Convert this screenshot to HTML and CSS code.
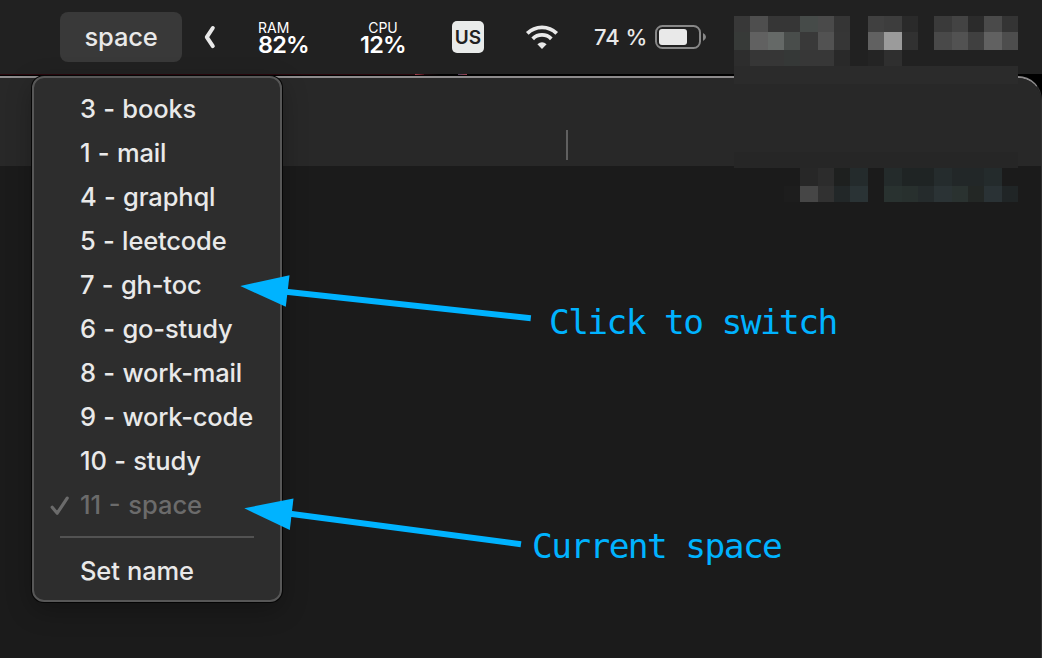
FILE: index.html
```html
<!DOCTYPE html>
<html lang="en">
<head>
<meta charset="utf-8">
<title>Space switcher</title>
<link rel="stylesheet" href="styles.css">
</head>
<body>
<div class="screen">
  <header class="menubar">
    <div class="space-button"><span class="space-label">space</span></div>
    <svg class="chevron" width="14" height="26" viewBox="0 0 14 26"><path d="M10.8 4 L4.8 13.2 L10.8 22.2" /></svg>
    <div class="stat ram"><span class="stat-name">RAM</span><span class="stat-value">82%</span></div>
    <div class="stat cpu"><span class="stat-name">CPU</span><span class="stat-value">12%</span></div>
    <div class="input-source"><span class="input-label">US</span></div>
    <svg class="wifi" width="34" height="26" viewBox="0 0 34 26">
      <path class="arc" d="M2.3 9.4 A20.8 20.8 0 0 1 31.7 9.4" />
      <path class="arc" d="M7.7 14.8 A13.2 13.2 0 0 1 26.3 14.8" />
      <path class="dot" d="M17 25 L12.4 20.3 Q17 16 21.6 20.3 Z" />
    </svg>
    <span class="percent">74 %</span>
    <svg class="battery" width="52" height="24" viewBox="0 0 52 24">
      <rect class="shell" x="1" y="1" width="44" height="22" rx="6.5" />
      <rect class="charge" x="4" y="4" width="28" height="16" rx="3" />
      <path class="cap" d="M48 8 Q51 9.5 51 12 Q51 14.5 48 16 Z" />
    </svg>
  </header>
  <div class="seam"><span class="glint glint-a"></span><span class="glint glint-b"></span></div>
  <main class="window">
    <div class="titlebar"><span class="divider"></span></div>
  </main>

  <svg class="mosaic" width="284" height="186" viewBox="0 0 284 186" shape-rendering="crispEdges">
    <g>
      <rect x="0" width="16" height="16" fill="#383838"/><rect x="16" width="18" height="16" fill="#4e4e4e"/><rect x="34" width="32" height="16" fill="#363636"/><rect x="66" width="18" height="16" fill="#464b49"/><rect x="84" width="16" height="16" fill="#4a4a4a"/><rect x="100" width="16" height="16" fill="#353535"/>
      <rect x="134" width="16" height="16" fill="#404040"/><rect x="150" width="18" height="16" fill="#3d3d3d"/><rect x="168" width="16" height="16" fill="#2a2a2a"/>
      <rect x="200" width="18" height="16" fill="#3a3a3a"/><rect x="218" width="16" height="16" fill="#434343"/><rect x="234" width="16" height="16" fill="#2b2b2b"/><rect x="250" width="18" height="16" fill="#4a4a4a"/><rect x="268" width="16" height="16" fill="#343434"/>
    </g>
    <g transform="translate(0 16)">
      <rect x="0" width="16" height="18" fill="#373a38"/><rect x="16" width="18" height="18" fill="#616161"/><rect x="34" width="16" height="18" fill="#656967"/><rect x="50" width="16" height="18" fill="#494d4b"/><rect x="66" width="18" height="18" fill="#393939"/><rect x="84" width="16" height="18" fill="#525252"/><rect x="100" width="16" height="18" fill="#363636"/>
      <rect x="134" width="16" height="18" fill="#616161"/><rect x="150" width="18" height="18" fill="#9b9b9b"/><rect x="168" width="16" height="18" fill="#313131"/>
      <rect x="200" width="18" height="18" fill="#494949"/><rect x="218" width="16" height="18" fill="#525252"/><rect x="234" width="16" height="18" fill="#404040"/><rect x="250" width="18" height="18" fill="#616161"/><rect x="268" width="16" height="18" fill="#4d4d4d"/>
    </g>
    <g transform="translate(0 34)">
      <rect x="0" width="16" height="16" fill="#2d2d2d"/><rect x="16" width="34" height="16" fill="#363636"/><rect x="50" width="16" height="16" fill="#353837"/><rect x="66" width="34" height="16" fill="#373737"/><rect x="100" width="16" height="16" fill="#292929"/>
      <rect x="134" width="16" height="16" fill="#242424"/><rect x="150" width="18" height="16" fill="#2f2f2f"/>
    </g>
    <rect y="50" width="284" height="18" fill="#2b2b2b"/>
    <rect y="68" width="284" height="68" fill="#282828"/>
    <rect y="136" width="284" height="16" fill="#262626"/>
    <g transform="translate(0 152)">
      <rect x="66" width="18" height="18" fill="#272727"/><rect x="84" width="16" height="18" fill="#2c2c2c"/><rect x="100" width="16" height="18" fill="#1e201f"/><rect x="116" width="18" height="18" fill="#242b2c"/>
      <rect x="150" width="18" height="18" fill="#242b2b"/><rect x="168" width="32" height="18" fill="#1f2424"/><rect x="200" width="18" height="18" fill="#252c2d"/><rect x="218" width="32" height="18" fill="#222728"/><rect x="250" width="18" height="18" fill="#242b2c"/>
    </g>
    <g transform="translate(0 170)">
      <rect x="50" width="16" height="16" fill="#1d1d1d"/><rect x="66" width="18" height="16" fill="#464646"/><rect x="84" width="16" height="16" fill="#313131"/><rect x="100" width="16" height="16" fill="#222728"/><rect x="116" width="18" height="16" fill="#2a3335"/>
      <rect x="150" width="18" height="16" fill="#293230"/><rect x="168" width="16" height="16" fill="#28302e"/><rect x="184" width="16" height="16" fill="#252b2c"/><rect x="200" width="18" height="16" fill="#2b3335"/><rect x="218" width="16" height="16" fill="#2a3230"/><rect x="234" width="16" height="16" fill="#232725"/><rect x="250" width="18" height="16" fill="#2a3235"/><rect x="268" width="16" height="16" fill="#202526"/>
    </g>
  </svg>

  <nav class="menu">
    <div class="item"><span class="name">3 - books</span></div>
    <div class="item"><span class="name">1 - mail</span></div>
    <div class="item"><span class="name">4 - graphql</span></div>
    <div class="item"><span class="name">5 - leetcode</span></div>
    <div class="item"><span class="name">7 - gh-toc</span></div>
    <div class="item"><span class="name">6 - go-study</span></div>
    <div class="item"><span class="name">8 - work-mail</span></div>
    <div class="item"><span class="name">9 - work-code</span></div>
    <div class="item"><span class="name">10 - study</span></div>
    <div class="item current">
      <svg class="check" width="20" height="20" viewBox="0 0 20 20"><path d="M2.2 11.3 L7.2 17.2 L17.2 2.2" /></svg>
      <span class="name">11 - space</span>
    </div>
    <hr class="separator">
    <div class="item"><span class="name">Set name</span></div>
  </nav>

  <svg class="arrows" width="1042" height="658" viewBox="0 0 1042 658">
    <path class="shaft" d="M286 291.7 L530.8 318.2" />
    <path class="head" d="M240.3 286 L289.5 275.3 L285.8 306.8 Z" />
    <path class="shaft" d="M290 513.8 L521 544.3" />
    <path class="head" d="M244.3 508.3 L293.5 498.5 L289.8 530 Z" />
  </svg>
  <span class="note note-switch">Click to switch</span>
  <span class="note note-current">Current space</span>
</div>
</body>
</html>
```
FILE: styles.css
```css
* { box-sizing: border-box; }
body { margin: 0; background: #000; }
.screen {
  position: relative;
  width: 1042px;
  height: 658px;
  overflow: hidden;
  display: flex;
  flex-direction: column;
  background: #000;
  color: #e9e9e9;
  font-family: Inter, "Liberation Sans", sans-serif;
}
.menubar {
  height: 74px;
  flex: none;
  display: flex;
  align-items: center;
  padding-left: 60px;
  background: #212121;
}
.space-button {
  width: 122px;
  height: 50px;
  border-radius: 8px;
  background: #393939;
  display: flex;
  align-items: center;
  justify-content: center;
}
.space-label { font-size: 25.5px; font-weight: 500; line-height: 50px; letter-spacing: -.2px; }
.chevron { margin-left: 20px; }
.chevron path { fill: none; stroke: #e9e9e9; stroke-width: 4; stroke-linecap: round; stroke-linejoin: round; }
.stat { display: flex; flex-direction: column; color: #fff; white-space: nowrap; padding-top: 1px; }
.stat-name { font-size: 14px; line-height: 17px; }
.stat-value { font-size: 23.5px; line-height: 18px; font-weight: 600; letter-spacing: -.8px; }
.ram { margin-left: 42px; width: 60px; }
.cpu { margin-left: 30px; width: 70px; align-items: center; }
.ram .stat-name { margin-top: -2px; }
.cpu .stat-name { margin-top: -2px; }
.input-source {
  width: 32px;
  height: 32px;
  margin-left: 34px;
  border-radius: 5px;
  background: #e9ebea;
  color: #212121;
  display: flex;
  align-items: center;
  justify-content: center;
}
.input-label { font-size: 19px; font-weight: 600; }
.wifi { margin-left: 41px; }
.wifi .arc { fill: none; stroke: #e9e9e9; stroke-width: 3.8; }
.wifi .dot { fill: #e9e9e9; }
.percent { width: 60px; margin-left: 35px; font-size: 22px; font-weight: 500; white-space: nowrap; }
.battery { margin-left: 1px; }
.shell { fill: none; stroke: #888; stroke-width: 2; }
.charge { fill: #e9e9e9; }
.cap { fill: #888; }
.seam {
  flex: none;
  display: flex;
  height: 1px;
  margin-bottom: 1px;
  padding-left: 415px;
  gap: 34px;
  background: linear-gradient(90deg, #2a070d 420px, #000 440px);
}
.glint { width: 9px; height: 1px; }
.glint-a { background: linear-gradient(90deg, #a84450, #4a0a14); }
.glint-b { background: linear-gradient(90deg, #4c4060, #a8404c); }
.window {
  flex: 1;
  border-top: 2px solid #8d8b8c;
  border-right: 1px solid #303030;
  border-top-right-radius: 24px;
  background: #1b1b1b;
  overflow: hidden;
}
.titlebar { height: 88px; background: #282828; padding: 52px 0 0 566px; }
.divider { display: block; width: 2px; height: 30px; background: #606060; }
.mosaic { position: absolute; left: 734px; top: 16px; }
.menu {
  position: absolute;
  left: 32px;
  top: 76px;
  width: 250px;
  height: 526px;
  padding-top: 9px;
  border: 2px solid #575757;
  border-radius: 12px;
  background: #2d2d2d;
  box-shadow: 0 0 0 1px #050505, 0 8px 26px rgba(0, 0, 0, .28);
}
.item { position: relative; height: 44px; padding-left: 46px; display: flex; align-items: center; }
.name { font-size: 25.5px; font-weight: 500; line-height: 44px; white-space: nowrap; letter-spacing: -.16px; word-spacing: .8px; }
.current { color: #6b6b6b; }
.current .name { letter-spacing: 0; }
.check { position: absolute; left: 16px; top: 13px; }
.check path { fill: none; stroke: #6b6b6b; stroke-width: 3.2; stroke-linecap: round; stroke-linejoin: round; }
.separator { height: 2px; margin: 9px 26px 11px; border: 0; background: #525252; }
.arrows { position: absolute; left: 0; top: 0; }
.shaft { fill: none; stroke: #00b3ff; stroke-width: 6; }
.head { fill: #00b3ff; }
.note {
  position: absolute;
  color: #00b3ff;
  font-family: "DejaVu Sans Mono", monospace;
  font-size: 34.5px;
  line-height: 40px;
  letter-spacing: -1.6px;
  white-space: nowrap;
}
.note-switch { left: 549px; top: 302px; }
.note-current { left: 532px; top: 526px; }
```
